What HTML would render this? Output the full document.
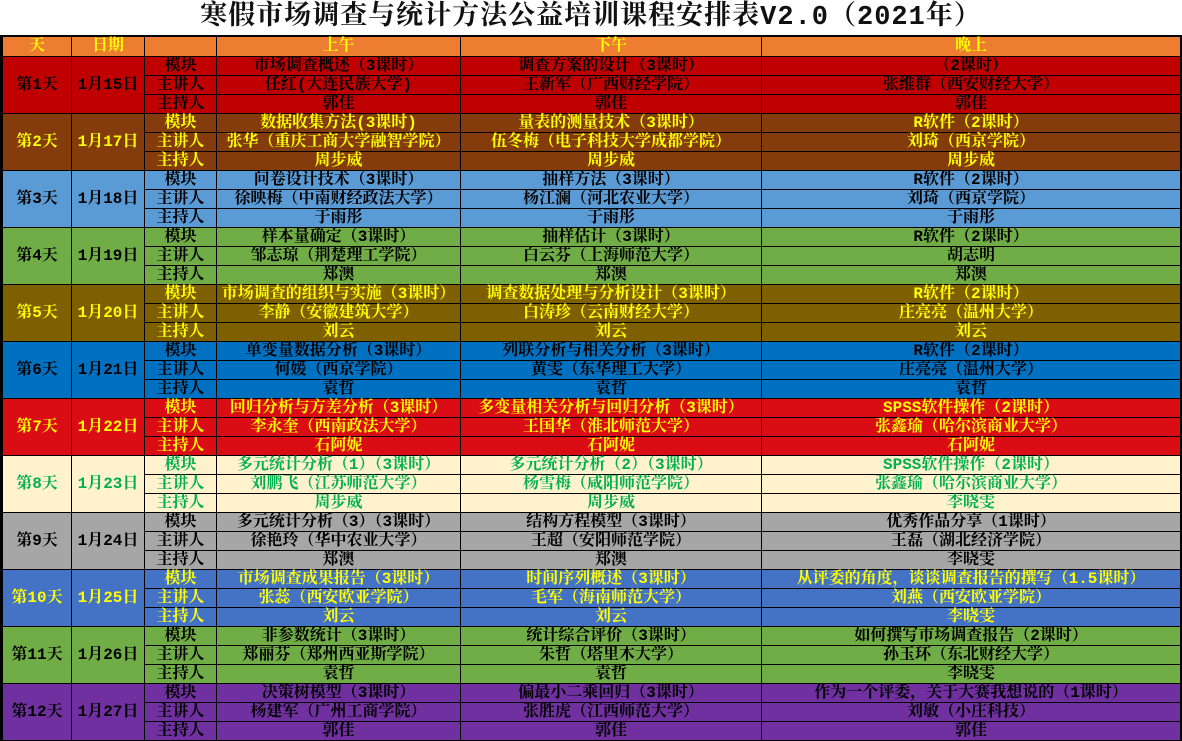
<!DOCTYPE html>
<html><head><meta charset="utf-8"><style>
body{margin:0;width:1182px;height:740px;background:#fff;overflow:hidden;font-family:"Liberation Mono","Noto Serif CJK SC",serif;}
.t{position:absolute;top:2px;left:0;width:1182px;text-align:center;font-size:27px;font-weight:bold;line-height:32px;color:#111;letter-spacing:1px}
table{position:absolute;top:35px;left:0;border-collapse:collapse;table-layout:fixed;width:1182px;border-top:2px solid #000;border-left:3px solid #000;border-right:2px solid #000}
td{border:1.5px solid #000;height:18px;padding:0;font-size:16px;font-weight:bold;line-height:17px;text-align:center;white-space:nowrap;overflow:visible}
tr.h td{background:#ED7D31;color:#FFFF00;height:19px}
.y td{color:#FFFF00}.k td{color:#000}.g td{color:#00B050}
</style></head><body>
<div class="t">寒假市场调查与统计方法公益培训课程安排表V2.0（2021年）</div>
<table>
<colgroup><col style="width:70px"><col style="width:73px"><col style="width:72px"><col style="width:244px"><col style="width:301px"><col></colgroup>
<tr class="h"><td>天</td><td>日期</td><td></td><td>上午</td><td>下午</td><td>晚上</td></tr>
<tbody class="k" style="background:#C00000"><tr><td rowspan="3">第1天</td><td rowspan="3">1月15日</td><td>模块</td><td>市场调查概述（3课时）</td><td>调查方案的设计（3课时）</td><td>（2课时）</td></tr><tr><td>主讲人</td><td>任红(大连民族大学)</td><td>王新军（广西财经学院）</td><td>张维群（西安财经大学）</td></tr><tr><td>主持人</td><td>郭佳</td><td>郭佳</td><td>郭佳</td></tr></tbody>
<tbody class="y" style="background:#843C0C"><tr><td rowspan="3">第2天</td><td rowspan="3">1月17日</td><td>模块</td><td>数据收集方法(3课时)</td><td>量表的测量技术（3课时）</td><td>R软件（2课时）</td></tr><tr><td>主讲人</td><td>张华（重庆工商大学融智学院）</td><td>伍冬梅（电子科技大学成都学院）</td><td>刘琦（西京学院）</td></tr><tr><td>主持人</td><td>周步威</td><td>周步威</td><td>周步威</td></tr></tbody>
<tbody class="k" style="background:#5B9BD5"><tr><td rowspan="3">第3天</td><td rowspan="3">1月18日</td><td>模块</td><td>问卷设计技术（3课时）</td><td>抽样方法（3课时）</td><td>R软件（2课时）</td></tr><tr><td>主讲人</td><td>徐映梅（中南财经政法大学）</td><td>杨江澜（河北农业大学）</td><td>刘琦（西京学院）</td></tr><tr><td>主持人</td><td>于雨彤</td><td>于雨彤</td><td>于雨彤</td></tr></tbody>
<tbody class="k" style="background:#70AD47"><tr><td rowspan="3">第4天</td><td rowspan="3">1月19日</td><td>模块</td><td>样本量确定（3课时）</td><td>抽样估计（3课时）</td><td>R软件（2课时）</td></tr><tr><td>主讲人</td><td>邹志琼（荆楚理工学院）</td><td>白云芬（上海师范大学）</td><td>胡志明</td></tr><tr><td>主持人</td><td>郑澳</td><td>郑澳</td><td>郑澳</td></tr></tbody>
<tbody class="y" style="background:#7F6000"><tr><td rowspan="3">第5天</td><td rowspan="3">1月20日</td><td>模块</td><td>市场调查的组织与实施（3课时）</td><td>调查数据处理与分析设计（3课时）</td><td>R软件（2课时）</td></tr><tr><td>主讲人</td><td>李静（安徽建筑大学）</td><td>白涛珍（云南财经大学）</td><td>庄亮亮（温州大学）</td></tr><tr><td>主持人</td><td>刘云</td><td>刘云</td><td>刘云</td></tr></tbody>
<tbody class="k" style="background:#0070C0"><tr><td rowspan="3">第6天</td><td rowspan="3">1月21日</td><td>模块</td><td>单变量数据分析（3课时）</td><td>列联分析与相关分析（3课时）</td><td>R软件（2课时）</td></tr><tr><td>主讲人</td><td>何媛（西京学院）</td><td>黄雯（东华理工大学）</td><td>庄亮亮（温州大学）</td></tr><tr><td>主持人</td><td>袁哲</td><td>袁哲</td><td>袁哲</td></tr></tbody>
<tbody class="y" style="background:#DA0C14"><tr><td rowspan="3">第7天</td><td rowspan="3">1月22日</td><td>模块</td><td>回归分析与方差分析（3课时）</td><td>多变量相关分析与回归分析（3课时）</td><td>SPSS软件操作（2课时）</td></tr><tr><td>主讲人</td><td>李永奎（西南政法大学）</td><td>王国华（淮北师范大学）</td><td>张鑫瑜（哈尔滨商业大学）</td></tr><tr><td>主持人</td><td>石阿妮</td><td>石阿妮</td><td>石阿妮</td></tr></tbody>
<tbody class="g" style="background:#FFF2CC"><tr><td rowspan="3">第8天</td><td rowspan="3">1月23日</td><td>模块</td><td>多元统计分析（1）（3课时）</td><td>多元统计分析（2）（3课时）</td><td>SPSS软件操作（2课时）</td></tr><tr><td>主讲人</td><td>刘鹏飞（江苏师范大学）</td><td>杨雪梅（咸阳师范学院）</td><td>张鑫瑜（哈尔滨商业大学）</td></tr><tr><td>主持人</td><td>周步威</td><td>周步威</td><td>李晓雯</td></tr></tbody>
<tbody class="k" style="background:#A6A6A6"><tr><td rowspan="3">第9天</td><td rowspan="3">1月24日</td><td>模块</td><td>多元统计分析（3）（3课时）</td><td>结构方程模型（3课时）</td><td>优秀作品分享（1课时）</td></tr><tr><td>主讲人</td><td>徐艳玲（华中农业大学）</td><td>王超（安阳师范学院）</td><td>王磊（湖北经济学院）</td></tr><tr><td>主持人</td><td>郑澳</td><td>郑澳</td><td>李晓雯</td></tr></tbody>
<tbody class="y" style="background:#4472C4"><tr><td rowspan="3">第10天</td><td rowspan="3">1月25日</td><td>模块</td><td>市场调查成果报告（3课时）</td><td>时间序列概述（3课时）</td><td>从评委的角度，谈谈调查报告的撰写（1.5课时）</td></tr><tr><td>主讲人</td><td>张蕊（西安欧亚学院）</td><td>毛军（海南师范大学）</td><td>刘燕（西安欧亚学院）</td></tr><tr><td>主持人</td><td>刘云</td><td>刘云</td><td>李晓雯</td></tr></tbody>
<tbody class="k" style="background:#70AD47"><tr><td rowspan="3">第11天</td><td rowspan="3">1月26日</td><td>模块</td><td>非参数统计（3课时）</td><td>统计综合评价（3课时）</td><td>如何撰写市场调查报告（2课时）</td></tr><tr><td>主讲人</td><td>郑丽芬（郑州西亚斯学院）</td><td>朱哲（塔里木大学）</td><td>孙玉环（东北财经大学）</td></tr><tr><td>主持人</td><td>袁哲</td><td>袁哲</td><td>李晓雯</td></tr></tbody>
<tbody class="k" style="background:#7030A0"><tr><td rowspan="3">第12天</td><td rowspan="3">1月27日</td><td>模块</td><td>决策树模型（3课时）</td><td>偏最小二乘回归（3课时）</td><td>作为一个评委，关于大赛我想说的（1课时）</td></tr><tr><td>主讲人</td><td>杨建军（广州工商学院）</td><td>张胜虎（江西师范大学）</td><td>刘敏（小庄科技）</td></tr><tr><td>主持人</td><td>郭佳</td><td>郭佳</td><td>郭佳</td></tr></tbody>
</table>
</body></html>
